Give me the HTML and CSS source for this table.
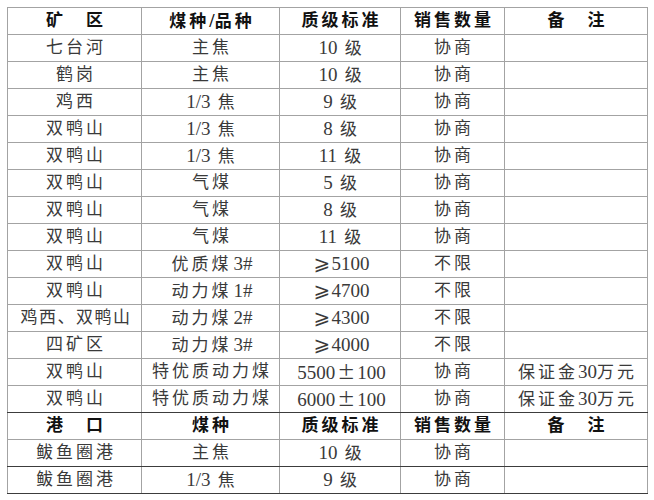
FILE: index.html
```html
<!DOCTYPE html>
<html lang="zh-CN">
<head>
<meta charset="utf-8">
<link rel="stylesheet" href="styles.css">
</head>
<body>
<table class="sheet">
  <colgroup>
    <col class="c1"><col class="c2"><col class="c3"><col class="c4"><col class="c5">
  </colgroup>
  <tr class="hd">
    <td>矿　区</td><td>煤种<span class="n">/</span>品种</td><td>质级标准</td><td>销售数量</td><td>备　注</td>
  </tr>
  <tr><td>七台河</td><td>主焦</td><td><span class="n">10</span> 级</td><td>协商</td><td></td></tr>
  <tr><td>鹤岗</td><td>主焦</td><td><span class="n">10</span> 级</td><td>协商</td><td></td></tr>
  <tr><td>鸡西</td><td><span class="n">1/3</span> 焦</td><td><span class="n">9</span> 级</td><td>协商</td><td></td></tr>
  <tr><td>双鸭山</td><td><span class="n">1/3</span> 焦</td><td><span class="n">8</span> 级</td><td>协商</td><td></td></tr>
  <tr><td>双鸭山</td><td><span class="n">1/3</span> 焦</td><td><span class="n">11</span> 级</td><td>协商</td><td></td></tr>
  <tr><td>双鸭山</td><td>气煤</td><td><span class="n">5</span> 级</td><td>协商</td><td></td></tr>
  <tr><td>双鸭山</td><td>气煤</td><td><span class="n">8</span> 级</td><td>协商</td><td></td></tr>
  <tr><td>双鸭山</td><td>气煤</td><td><span class="n">11</span> 级</td><td>协商</td><td></td></tr>
  <tr><td>双鸭山</td><td>优质煤<span class="n sp">3#</span></td><td><span class="sym">⩾</span><span class="n">5100</span></td><td>不限</td><td></td></tr>
  <tr><td>双鸭山</td><td>动力煤<span class="n sp">1#</span></td><td><span class="sym">⩾</span><span class="n">4700</span></td><td>不限</td><td></td></tr>
  <tr><td class="tight">鸡西、双鸭山</td><td>动力煤<span class="n sp">2#</span></td><td><span class="sym">⩾</span><span class="n">4300</span></td><td>不限</td><td></td></tr>
  <tr><td>四矿区</td><td>动力煤<span class="n sp">3#</span></td><td><span class="sym">⩾</span><span class="n">4000</span></td><td>不限</td><td></td></tr>
  <tr><td>双鸭山</td><td>特优质动力煤</td><td><span class="n">5500</span><span class="pm">±</span><span class="n">100</span></td><td>协商</td><td>保证金<span class="n">30</span>万元</td></tr>
  <tr class="dark"><td>双鸭山</td><td>特优质动力煤</td><td><span class="n">6000</span><span class="pm">±</span><span class="n">100</span></td><td>协商</td><td>保证金<span class="n">30</span>万元</td></tr>
  <tr class="hd">
    <td>港　口</td><td>煤种</td><td>质级标准</td><td>销售数量</td><td>备　注</td>
  </tr>
  <tr class="dark"><td>鲅鱼圈港</td><td>主焦</td><td><span class="n">10</span> 级</td><td>协商</td><td></td></tr>
  <tr class="dark"><td>鲅鱼圈港</td><td><span class="n">1/3</span> 焦</td><td><span class="n">9</span> 级</td><td>协商</td><td></td></tr>
</table>
</body>
</html>
```
FILE: styles.css
```css
html, body {
  margin: 0;
  padding: 0;
  background: #ffffff;
}
.sheet {
  margin: 7px 0 0 7px;
  border-collapse: collapse;
  table-layout: fixed;
  width: 641px;
  font-family: "Liberation Serif", "Noto Sans CJK SC", serif;
  font-size: 17px;
  color: #3a3a3a;
}
.c1 { width: 134px; }
.c2 { width: 138px; }
.c3 { width: 121px; }
.c4 { width: 104px; }
.c5 { width: 143px; }
.sheet td {
  border: 1px solid #a3a3a3;
  height: 26px;
  padding: 0 0 0 3px;
  text-align: center;
  vertical-align: middle;
  letter-spacing: 3px;
  line-height: 20px;
  white-space: nowrap;
  font-weight: 400;
}
.sheet td.tight {
  letter-spacing: 1.5px;
}
.sheet .hd td {
  font-weight: 700;
  color: #111111;
}
.sheet tr.dark td {
  border-bottom-color: #3c3c3c;
}
.n {
  font-family: "Liberation Serif", serif;
  font-size: 19px;
  letter-spacing: 0;
}
.n.sp {
  margin-left: 2px;
}
.sym {
  font-family: "DejaVu Sans", "Noto Sans CJK SC", sans-serif;
  font-size: 20px;
  letter-spacing: 0;
  margin-right: 1px;
}
.pm {
  font-family: "Noto Sans CJK SC", sans-serif;
  font-size: 18px;
  letter-spacing: 0;
  margin: 0 2px;
}
```
